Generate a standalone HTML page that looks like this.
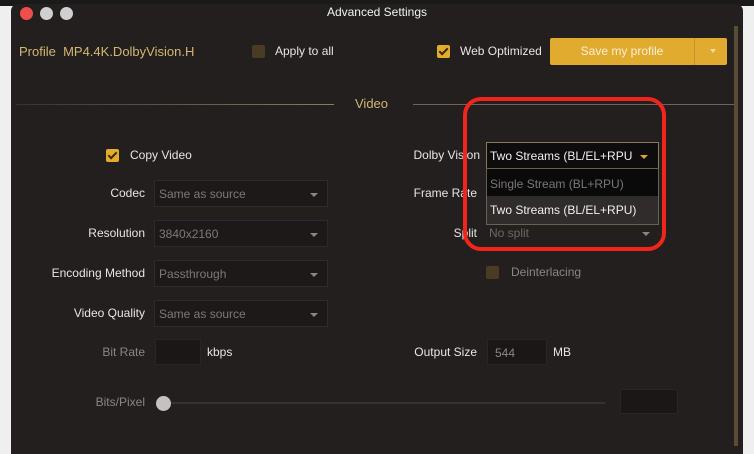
<!DOCTYPE html>
<html><head><meta charset="utf-8"><style>
*{margin:0;padding:0;box-sizing:border-box}
body{width:754px;height:446px;overflow:hidden;background:#efefef;font-family:"Liberation Sans",sans-serif;font-size:12px;position:relative}
.top{position:absolute;left:0;top:0;width:754px;height:6px;background:#1b1a1a}
.win{position:absolute;left:11px;top:4px;width:732px;height:450px;background:#221f1e;border-radius:7px 7px 0 0}
.a{position:absolute;white-space:nowrap}
.dot{position:absolute;top:7px;width:13px;height:13px;border-radius:50%;background:#d0d0d0}
.lbl{color:#e6e6e6;text-align:right}
.dim{color:#8a8684}
.sel{position:absolute;height:27px;background:#1c1918;border:1px solid #2f2b2a;color:#7d7977;padding:6px 0 0 4px}
.sel::after{content:"";position:absolute;right:9px;top:12px;border:4px solid transparent;border-top:4px solid #8a8684;border-bottom:0}
.cb{position:absolute;width:13px;height:13px;border-radius:2px;background:#4a3b24}
.cbk{background:#e3ad2c}
.cbk::after{content:"";position:absolute;left:4px;top:1px;width:3px;height:7px;border:solid #3a2a10;border-width:0 2px 2px 0;transform:rotate(45deg)}
.box{position:absolute;background:#1a1716;border:1px solid #2a2524}
</style></head><body>
<div class="top"></div>
<div class="win"></div>
<div class="dot" style="left:20px;background:#f04e4a"></div>
<div class="dot" style="left:40px"></div>
<div class="dot" style="left:60px"></div>
<div class="a" style="left:0;width:754px;text-align:center;top:5px;color:#f2f2f2">Advanced Settings</div>
<div class="a" style="left:19px;top:44px;color:#d3b672;font-size:13px">Profile&nbsp; MP4.4K.DolbyVision.H</div>
<div class="cb" style="left:252px;top:45px"></div>
<div class="a lbl" style="left:275px;top:44px">Apply to all</div>
<div class="cb cbk" style="left:437px;top:45px"></div>
<div class="a lbl" style="left:460px;top:44px">Web Optimized</div>
<div class="a" style="left:550px;top:38px;width:177px;height:27px;background:#e1ab30;border-radius:2px;color:#fbefd6;font-size:12px;padding-top:6px"><span style="position:absolute;left:0;width:144px;text-align:center">Save my profile</span><span style="position:absolute;left:144px;top:0;width:1px;height:27px;background:#c4942a"></span><span style="position:absolute;right:11px;top:11px;border:3px solid transparent;border-top:4px solid #f4d9a2;border-bottom:0"></span></div>
<div class="a" style="left:16px;top:104px;width:318px;height:1px;background:linear-gradient(90deg,#3a322a,#8a7a66)"></div>
<div class="a" style="left:355px;top:96px;color:#d3b672;font-size:13px">Video</div>
<div class="a" style="left:413px;top:104px;width:321px;height:1px;background:#6e6457"></div>
<div class="a" style="left:734px;top:26px;width:4px;height:420px;background:#5a4d38"></div>
<div class="cb cbk" style="left:106px;top:149px"></div>
<div class="a lbl" style="left:130px;top:148px">Copy Video</div>
<div class="a lbl" style="left:40px;width:105px;top:186px">Codec</div>
<div class="sel" style="left:154px;top:180px;width:174px">Same as source</div>
<div class="a lbl" style="left:40px;width:105px;top:226px">Resolution</div>
<div class="sel" style="left:154px;top:220px;width:174px;border-color:#2a2836">3840x2160</div>
<div class="a lbl" style="left:40px;width:105px;top:266px">Encoding Method</div>
<div class="sel" style="left:154px;top:260px;width:174px">Passthrough</div>
<div class="a lbl" style="left:40px;width:105px;top:306px">Video Quality</div>
<div class="sel" style="left:154px;top:300px;width:174px">Same as source</div>
<div class="a dim" style="left:40px;width:105px;top:345px;text-align:right">Bit Rate</div>
<div class="box" style="left:155px;top:339px;width:46px;height:26px"></div>
<div class="a lbl" style="left:207px;top:345px">kbps</div>
<div class="a dim" style="left:40px;width:105px;top:395px;text-align:right">Bits/Pixel</div>
<div class="a" style="left:165px;top:402px;width:440px;height:2px;background:#3b3030"></div>
<div class="a" style="left:156px;top:396px;width:15px;height:15px;border-radius:50%;background:#c4c1bf"></div>
<div class="box" style="left:620px;top:389px;width:58px;height:25px"></div>
<div class="a lbl" style="left:390px;width:90px;top:148px">Dolby Vision</div>
<div class="a lbl" style="left:390px;width:87px;top:186px">Frame Rate</div>
<div class="a lbl" style="left:390px;width:87px;top:226px">Split</div>
<div class="a" style="left:489px;top:226px;color:#6c6866">No split</div>
<div class="a" style="left:642px;top:232px;border:4px solid transparent;border-top:4px solid #8a8684;border-bottom:0"></div>
<div class="cb" style="left:486px;top:266px"></div>
<div class="a dim" style="left:511px;top:265px">Deinterlacing</div>
<div class="a lbl" style="left:390px;width:87px;top:345px">Output Size</div>
<div class="box" style="left:487px;top:339px;width:60px;height:26px;color:#8a8684;padding:6px 0 0 7px">544</div>
<div class="a lbl" style="left:553px;top:345px">MB</div>
<div class="a" style="left:486px;top:142px;width:173px;height:27px;background:#0e0c0c;border:1px solid #8a7a5a;color:#f0f0f0;padding:6px 0 0 3px;overflow:hidden">Two Streams (BL/EL+RPU<span style="position:absolute;right:10px;top:12px;border:4px solid transparent;border-top:4px solid #d9a43a;border-bottom:0"></span></div>
<div class="a" style="left:486px;top:168px;width:173px;height:57px;border:1px solid #6b6150;background:#0b0a0a">
<div style="height:27px;color:#7a7674;padding:8px 0 0 3px">Single Stream (BL+RPU)</div>
<div style="height:28px;background:#302c2b;color:#f0f0f0;padding:7px 0 0 3px">Two Streams (BL/EL+RPU)</div></div>
<div class="a" style="left:463px;top:97px;width:203px;height:154px;border:4px solid #f0251b;border-radius:18px"></div>
</body></html>
